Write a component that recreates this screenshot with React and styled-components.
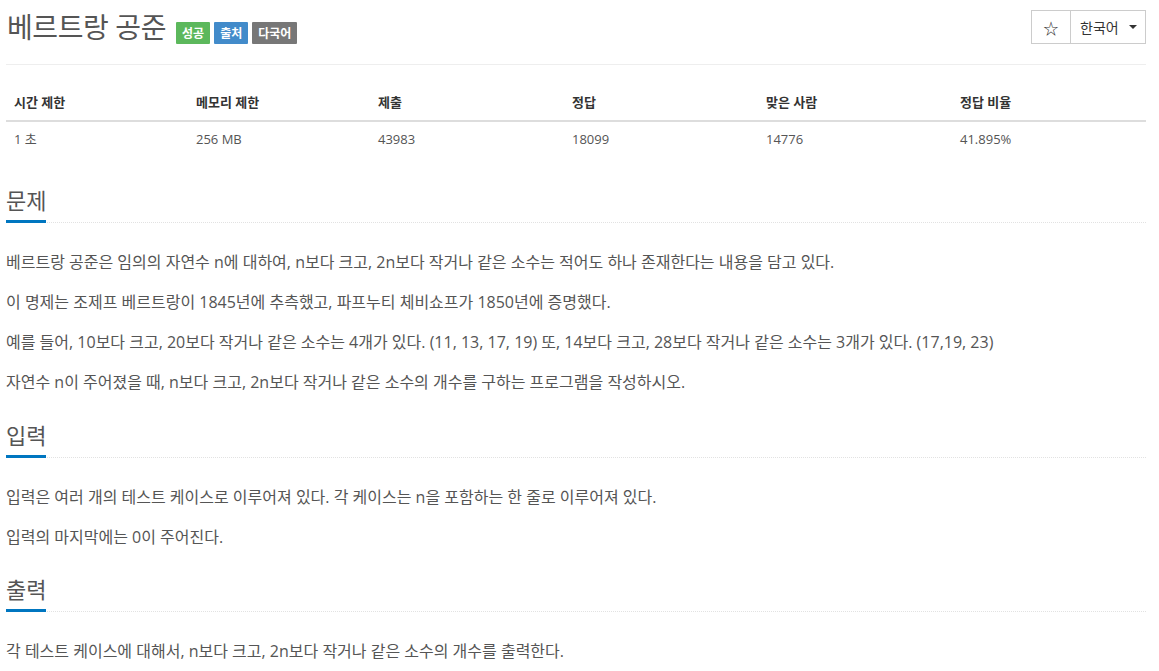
import React from "react";
import styled, { createGlobalStyle } from "styled-components";

const Global = createGlobalStyle`
  html, body { margin: 0; padding: 0; background: #fff; }
  body {
    font-family: "Open Sans", "Noto Sans CJK KR", sans-serif;
    font-size: 14px;
    color: #555;
  }
  * { box-sizing: border-box; }
`;

const Page = styled.div`
  width: 1140px;
  margin-left: 6px;
`;

const Header = styled.div`
  display: flex;
  justify-content: space-between;
  align-items: flex-start;
  padding-top: 10px;
`;

const TitleGroup = styled.div`
  display: flex;
  align-items: flex-end;
  gap: 10px;
`;

const Title = styled.h1`
  margin: 0;
  font-size: 28px;
  font-weight: 400;
  line-height: 34px;
  letter-spacing: -0.4px;
  color: #555;
  padding-left: 1px;
`;

const Labels = styled.div`
  display: flex;
  gap: 4px;
`;

const Label = styled.span`
  display: inline-flex;
  align-items: center;
  height: 22px;
  padding: 0 6px;
  font-size: 12px;
  font-weight: 700;
  color: #fff;
  background: ${(p) => p.$bg};
  border-radius: 1px;
`;

const BtnGroup = styled.div`
  display: flex;
`;

const Btn = styled.button`
  height: 34px;
  padding: ${(p) => (p.$joined ? "0 8px 0 9px" : "0")};
  font-family: "Open Sans", "Noto Sans CJK KR", sans-serif;
  font-size: ${(p) => (p.$joined ? "14px" : "15px")};
  color: #333;
  background: #fff;
  border: 1px solid #ccc;
  margin-left: ${(p) => (p.$joined ? "-1px" : "0")};
  display: inline-flex;
  align-items: center;
  justify-content: ${(p) => (p.$joined ? "space-between" : "center")};
  white-space: nowrap;
  width: ${(p) => p.$w}px;
`;

const Caret = styled.span`
  display: inline-block;
  width: 0;
  height: 0;
  border-top: 4px solid #333;
  border-left: 4px solid transparent;
  border-right: 4px solid transparent;
`;

const Rule = styled.hr`
  margin: 20px 0;
  border: 0;
  border-top: 1px solid #eee;
`;

const Table = styled.table`
  width: 100%;
  border-collapse: collapse;
  margin-bottom: 20px;
  font-size: 13px;
  line-height: 1.42857;
`;

const Th = styled.th`
  text-align: left;
  padding: 8px;
  font-weight: 700;
  color: #333;
  border-bottom: 2px solid #ddd;
  width: ${(p) => p.$w}px;
`;

const Td = styled.td`
  padding: 8px;
  color: #555;
`;

const Section = styled.section`
  margin-top: ${(p) => p.$mt}px;
`;

const Headline = styled.div`
  border-bottom: 1px dotted #e2e2e2;
  margin-bottom: 27px;
`;

const H2 = styled.h2`
  display: inline-block;
  margin: 0 0 -1px 0;
  padding: 0 0 8px 0;
  font-size: 22px;
  font-weight: 400;
  line-height: 24px;
  color: #555;
  border-bottom: 3px solid #0076c0;
`;

const P = styled.p`
  margin: 0 0 15px 0;
  font-size: 16px;
  line-height: 25px;
  color: #555;
  &:last-child { margin-bottom: 0; }
`;

const cols = [
  ["시간 제한", "1 초", 182],
  ["메모리 제한", "256 MB", 182],
  ["제출", "43983", 194],
  ["정답", "18099", 194],
  ["맞은 사람", "14776", 194],
  ["정답 비율", "41.895%", 194],
];

const sections = [
  {
    title: "문제",
    mt: 32,
    paras: [
      "베르트랑 공준은 임의의 자연수 n에 대하여, n보다 크고, 2n보다 작거나 같은 소수는 적어도 하나 존재한다는 내용을 담고 있다.",
      "이 명제는 조제프 베르트랑이 1845년에 추측했고, 파프누티 체비쇼프가 1850년에 증명했다.",
      "예를 들어, 10보다 크고, 20보다 작거나 같은 소수는 4개가 있다. (11, 13, 17, 19) 또, 14보다 크고, 28보다 작거나 같은 소수는 3개가 있다. (17,19, 23)",
      "자연수 n이 주어졌을 때, n보다 크고, 2n보다 작거나 같은 소수의 개수를 구하는 프로그램을 작성하시오.",
    ],
  },
  {
    title: "입력",
    mt: 28,
    paras: [
      "입력은 여러 개의 테스트 케이스로 이루어져 있다. 각 케이스는 n을 포함하는 한 줄로 이루어져 있다.",
      "입력의 마지막에는 0이 주어진다.",
    ],
  },
  {
    title: "출력",
    mt: 27,
    paras: ["각 테스트 케이스에 대해서, n보다 크고, 2n보다 작거나 같은 소수의 개수를 출력한다."],
  },
];

export default function App() {
  return (
    <>
      <Global />
      <Page>
        <Header>
          <TitleGroup>
            <Title>베르트랑 공준</Title>
            <Labels>
              <Label $bg="#5cb85c">성공</Label>
              <Label $bg="#428bca">출처</Label>
              <Label $bg="#777777">다국어</Label>
            </Labels>
          </TitleGroup>
          <BtnGroup>
            <Btn $w={40}>☆</Btn>
            <Btn $w={76} $joined>
              한국어 <Caret />
            </Btn>
          </BtnGroup>
        </Header>
        <Rule />
        <Table>
          <thead>
            <tr>
              {cols.map(([h, , w]) => (
                <Th key={h} $w={w}>{h}</Th>
              ))}
            </tr>
          </thead>
          <tbody>
            <tr>
              {cols.map(([h, v]) => (
                <Td key={h}>{v}</Td>
              ))}
            </tr>
          </tbody>
        </Table>
        {sections.map((s) => (
          <Section key={s.title} $mt={s.mt}>
            <Headline>
              <H2>{s.title}</H2>
            </Headline>
            {s.paras.map((p, i) => (
              <P key={i}>{p}</P>
            ))}
          </Section>
        ))}
      </Page>
    </>
  );
}
